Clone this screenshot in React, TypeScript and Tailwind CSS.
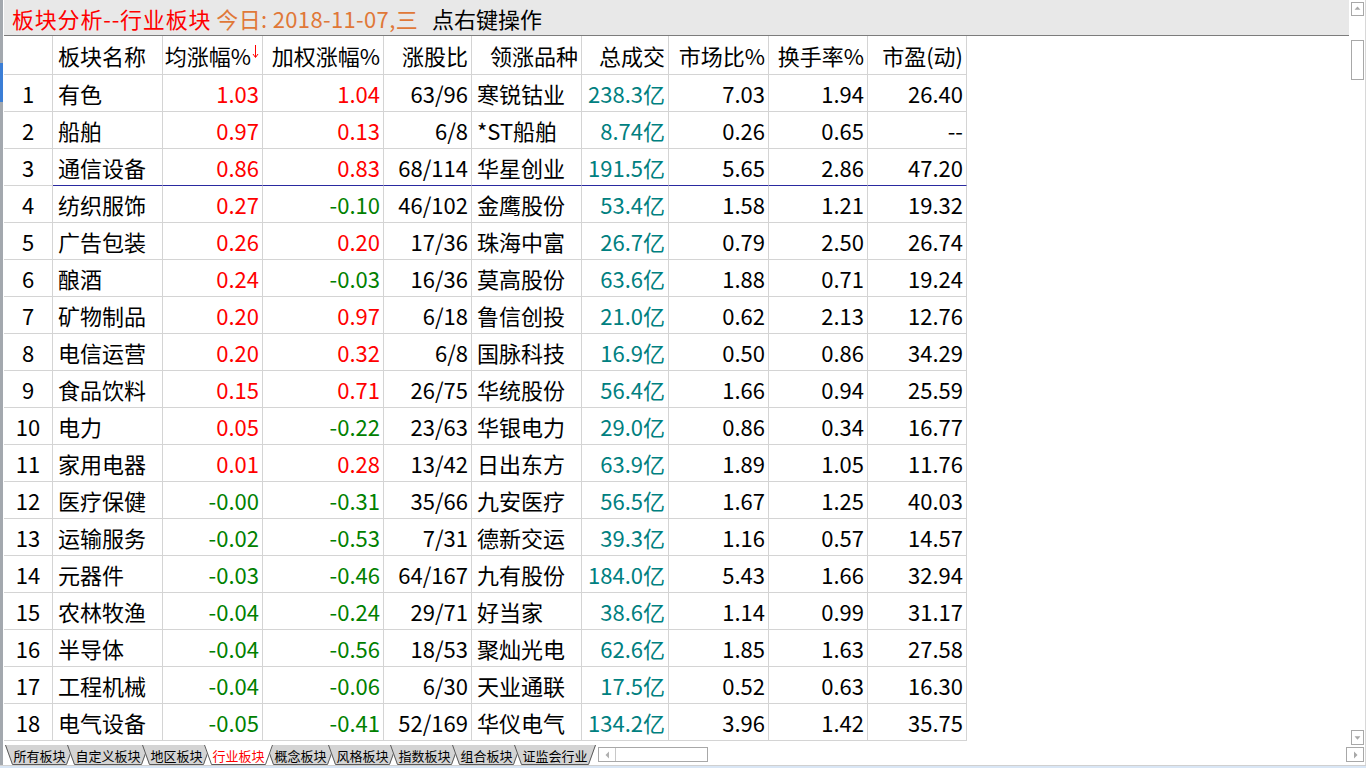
import React from 'react';

type Row = [string, string, string, string, string, string, string, string, string];

const rows: Row[] = [
  ['有色', '1.03', '1.04', '63/96', '寒锐钴业', '238.3亿', '7.03', '1.94', '26.40'],
  ['船舶', '0.97', '0.13', '6/8', '*ST船舶', '8.74亿', '0.26', '0.65', '--'],
  ['通信设备', '0.86', '0.83', '68/114', '华星创业', '191.5亿', '5.65', '2.86', '47.20'],
  ['纺织服饰', '0.27', '-0.10', '46/102', '金鹰股份', '53.4亿', '1.58', '1.21', '19.32'],
  ['广告包装', '0.26', '0.20', '17/36', '珠海中富', '26.7亿', '0.79', '2.50', '26.74'],
  ['酿酒', '0.24', '-0.03', '16/36', '莫高股份', '63.6亿', '1.88', '0.71', '19.24'],
  ['矿物制品', '0.20', '0.97', '6/18', '鲁信创投', '21.0亿', '0.62', '2.13', '12.76'],
  ['电信运营', '0.20', '0.32', '6/8', '国脉科技', '16.9亿', '0.50', '0.86', '34.29'],
  ['食品饮料', '0.15', '0.71', '26/75', '华统股份', '56.4亿', '1.66', '0.94', '25.59'],
  ['电力', '0.05', '-0.22', '23/63', '华银电力', '29.0亿', '0.86', '0.34', '16.77'],
  ['家用电器', '0.01', '0.28', '13/42', '日出东方', '63.9亿', '1.89', '1.05', '11.76'],
  ['医疗保健', '-0.00', '-0.31', '35/66', '九安医疗', '56.5亿', '1.67', '1.25', '40.03'],
  ['运输服务', '-0.02', '-0.53', '7/31', '德新交运', '39.3亿', '1.16', '0.57', '14.57'],
  ['元器件', '-0.03', '-0.46', '64/167', '九有股份', '184.0亿', '5.43', '1.66', '32.94'],
  ['农林牧渔', '-0.04', '-0.24', '29/71', '好当家', '38.6亿', '1.14', '0.99', '31.17'],
  ['半导体', '-0.04', '-0.56', '18/53', '聚灿光电', '62.6亿', '1.85', '1.63', '27.58'],
  ['工程机械', '-0.04', '-0.06', '6/30', '天业通联', '17.5亿', '0.52', '0.63', '16.30'],
  ['电气设备', '-0.05', '-0.41', '52/169', '华仪电气', '134.2亿', '3.96', '1.42', '35.75'],
];

const W = ['w-[49px]', 'w-[110px]', 'w-[100px]', 'w-[121px]', 'w-[88px]', 'w-[110px]', 'w-[87px]', 'w-[100px]', 'w-[99px]', 'w-[99px]'];

const tabs = ['所有板块', '自定义板块', '地区板块', '行业板块', '概念板块', '风格板块', '指数板块', '组合板块', '证监会行业'];

const signColor = (v: string) => (v.startsWith('-') ? 'text-[#008000]' : 'text-[#ff0000]');

function Tab({ label, active, first }: { label: string; active: boolean; first: boolean }) {
  const wide = label.length === 5;
  const w = wide ? 82 : 69;
  return (
    <div
      className={`relative h-[20px] shrink-0 flex items-center justify-center ${wide ? 'w-[82px]' : 'w-[69px]'} ${first ? '' : '-ml-[7px]'} ${active ? 'z-10' : ''}`}
    >
      <svg className="absolute inset-0" width={w} height={20}>
        <polygon points={`0,0 7,19.5 ${w - 7},19.5 ${w},0`} fill={active ? '#ffffff' : '#d4d4d4'} />
        <polyline
          points={`0.5,0 7.5,19.5 ${w - 7.5},19.5 ${w - 0.5},0`}
          fill="none"
          stroke="#5a5a5a"
          strokeWidth="1"
        />
      </svg>
      <span className={`relative text-[13px] leading-none ${active ? 'text-[#ff0000]' : 'text-black'}`}>{label}</span>
    </div>
  );
}

function ArrowBtn({ dir }: { dir: 'up' | 'down' | 'left' | 'right' }) {
  const pts =
    dir === 'up'
      ? '3,8 10,8 6.5,4'
      : dir === 'down'
      ? '3,5 10,5 6.5,9'
      : dir === 'left'
      ? '8,3.5 8,10.5 4.5,7'
      : '5,3.5 5,10.5 8.5,7';
  return (
    <svg width="13" height="14" viewBox="0 0 13 14" className="block">
      <polygon points={pts} fill="#a8a8a8" />
    </svg>
  );
}

export default function App() {
  return (
    <div className="w-[1366px] h-[768px] flex flex-col bg-white overflow-hidden font-['Noto_Sans_CJK_SC','Noto_Sans',sans-serif] text-black">
      <div className="flex flex-row h-[765px]">
        {/* left strip */}
        <div className="w-[3px] h-full flex flex-col bg-[#a3a8ae]">
          <div className="h-[63px]" />
          <div className="h-[39px] bg-[#3b7ed6]" />
        </div>
        <div className="w-[1px] h-full bg-white" />

        {/* main */}
        <div className="w-[1345px] h-full flex flex-col">
          {/* title bar */}
          <div className="h-[36px] bg-[#e8e8e8] border-b border-[#7c7c7c] flex items-center pl-[8px] text-[22px] leading-none whitespace-nowrap">
            <span className="text-[#ff0000] tracking-[0.8px]">板块分析--行业板块</span>
            <span className="ml-[5px] text-[#e07838] tracking-[0.35px]">今日: 2018-11-07,三</span>
            <span className="ml-[14px] text-black">点右键操作</span>
          </div>

          {/* table */}
          <div className="flex flex-col text-[22px] leading-none">
            <div className="flex h-[39px]">
              {['', '板块名称', '均涨幅%', '加权涨幅%', '涨股比', '领涨品种', '总成交', '市场比%', '换手率%', '市盈(动)'].map((h, i) => (
                <div
                  key={i}
                  className={`${W[i]} shrink-0 h-full border-r border-b border-[#d4d4d4] flex items-center ${
                    i === 1 ? 'justify-start pl-[5px]' : 'justify-end pr-[3px]'
                  }`}
                >
                  <span>{h}</span>
                  {i === 2 && (
                    <svg width="7" height="14" viewBox="0 0 7 14" className="ml-[1px] -mt-[6px]">
                      <line x1="3.5" y1="0" x2="3.5" y2="12" stroke="#ff0000" strokeWidth="1" />
                      <polyline points="1,9 3.5,12.5 6,9" fill="none" stroke="#ff0000" strokeWidth="1" />
                    </svg>
                  )}
                </div>
              ))}
            </div>
            {rows.map((r, ri) => {
              const blue = ri === 2;
              const bb = blue ? 'border-b-[#2a2aa0]' : '';
              return (
                <div key={ri} className="flex h-[37px]">
                  <div className={`${W[0]} shrink-0 h-full border-r border-b border-[#d4d4d4] flex items-center justify-center`}>
                    {ri + 1}
                  </div>
                  <div className={`${W[1]} shrink-0 h-full border-r border-b border-[#d4d4d4] ${bb} flex items-center pl-[5px]`}>
                    {r[0]}
                  </div>
                  <div className={`${W[2]} shrink-0 h-full border-r border-b border-[#d4d4d4] ${bb} flex items-center justify-end pr-[3px] ${signColor(r[1])}`}>
                    {r[1]}
                  </div>
                  <div className={`${W[3]} shrink-0 h-full border-r border-b border-[#d4d4d4] ${bb} flex items-center justify-end pr-[3px] ${signColor(r[2])}`}>
                    {r[2]}
                  </div>
                  <div className={`${W[4]} shrink-0 h-full border-r border-b border-[#d4d4d4] ${bb} flex items-center justify-end pr-[3px]`}>
                    {r[3]}
                  </div>
                  <div className={`${W[5]} shrink-0 h-full border-r border-b border-[#d4d4d4] ${bb} flex items-center pl-[5px]`}>
                    {r[4]}
                  </div>
                  <div className={`${W[6]} shrink-0 h-full border-r border-b border-[#d4d4d4] ${bb} flex items-center justify-end pr-[3px] text-[#008080]`}>
                    {r[5]}
                  </div>
                  <div className={`${W[7]} shrink-0 h-full border-r border-b border-[#d4d4d4] ${bb} flex items-center justify-end pr-[3px]`}>
                    {r[6]}
                  </div>
                  <div className={`${W[8]} shrink-0 h-full border-r border-b border-[#d4d4d4] ${bb} flex items-center justify-end pr-[3px]`}>
                    {r[7]}
                  </div>
                  <div className={`${W[9]} shrink-0 h-full border-r border-b border-[#d4d4d4] ${bb} flex items-center justify-end pr-[3px]`}>
                    {r[8]}
                  </div>
                </div>
              );
            })}
          </div>

          {/* tab bar */}
          <div className="h-[24px] flex items-start pt-[4px] pl-[1px]">
            {tabs.map((t, i) => (
              <Tab key={t} label={t} active={t === '行业板块'} first={i === 0} />
            ))}
            <div className="ml-[2px] mt-[2px] w-[110px] h-[15px] border border-[#a8a8a8] bg-white flex">
              <div className="w-[17px] h-full border-r border-[#c8c8c8] flex items-center justify-center">
                <svg width="8" height="10" viewBox="0 0 8 10">
                  <polygon points="6,1.5 6,8.5 2.5,5" fill="#b0b0b0" />
                </svg>
              </div>
            </div>
          </div>
        </div>

        {/* right scrollbar column */}
        <div className="w-[17px] h-full flex flex-col items-start border-r border-[#d8d8d8]">
          <div className="ml-[2px] mt-[2px] w-[13px] h-[14px] border border-[#a8a8a8] bg-white flex items-center justify-center">
            <ArrowBtn dir="up" />
          </div>
          <div className="ml-[2px] mt-[24px] w-[13px] h-[40px] border border-[#a8a8a8] bg-white" />
          <div className="flex-1" />
          <div className="ml-[2px] w-[13px] h-[15px] border border-[#a8a8a8] bg-white flex items-center justify-center">
            <ArrowBtn dir="down" />
          </div>
          <div className="-ml-[3px] mt-[2px] mb-[3px] w-[18px] h-[15px] border border-[#a8a8a8] bg-white flex items-center justify-center">
            <ArrowBtn dir="right" />
          </div>
        </div>
      </div>
      <div className="h-[1px] bg-[#d0d0d0]" />
      <div className="h-[2px] bg-[#d9e6f5]" />
    </div>
  );
}
